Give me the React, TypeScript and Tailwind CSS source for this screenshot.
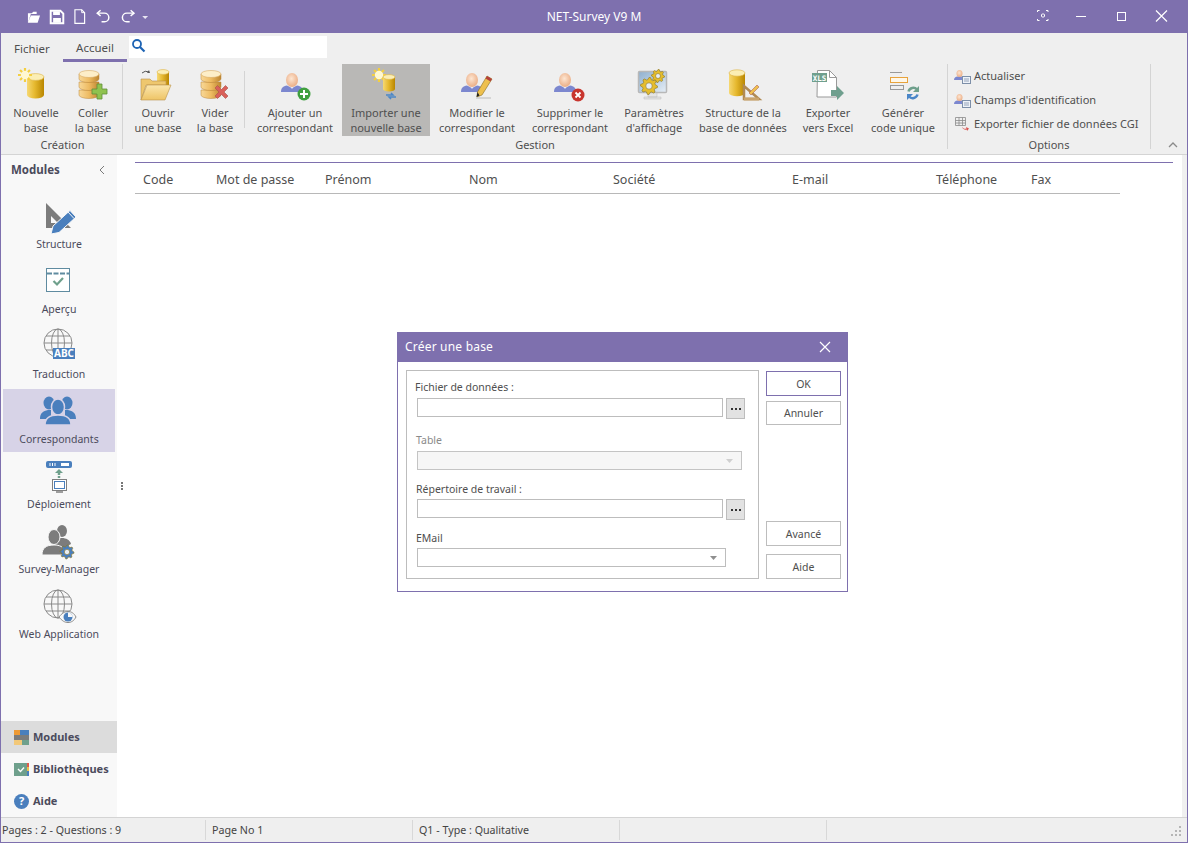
import type { ReactNode } from 'react';

/* ─── Shared gradients ─── */
function Defs() {
  return (
    <svg className="absolute h-0 w-0" aria-hidden="true">
      <defs>
        <linearGradient id="gold" x1="0" x2="1" y1="0" y2="0">
          <stop offset="0" stopColor="#f6d873" />
          <stop offset="0.45" stopColor="#e6b92f" />
          <stop offset="1" stopColor="#b98600" />
        </linearGradient>
        <linearGradient id="disc" x1="0" x2="1" y1="0" y2="0">
          <stop offset="0" stopColor="#f8d898" />
          <stop offset="0.5" stopColor="#eebb62" />
          <stop offset="1" stopColor="#bd8530" />
        </linearGradient>
        <linearGradient id="folder" x1="0" x2="0" y1="0" y2="1">
          <stop offset="0" stopColor="#fbe6ad" />
          <stop offset="1" stopColor="#eec465" />
        </linearGradient>
        <linearGradient id="screen" x1="0" x2="1" y1="0" y2="1">
          <stop offset="0" stopColor="#8fb0cf" />
          <stop offset="1" stopColor="#e6eef6" />
        </linearGradient>
        <radialGradient id="head" cx="0.45" cy="0.4" r="0.65">
          <stop offset="0" stopColor="#fde6d2" />
          <stop offset="1" stopColor="#eaa97f" />
        </radialGradient>
      </defs>
    </svg>
  );
}

/* ─── Icon pieces ─── */
function Cyl({ x, y, w, h }: { x: number; y: number; w: number; h: number }) {
  const ry = w / 5;
  return (
    <g>
      <path d={`M${x} ${y}v${h}a${w / 2} ${ry} 0 0 0 ${w} 0v${-h}z`} fill="url(#gold)" />
      <ellipse cx={x + w / 2} cy={y} rx={w / 2} ry={ry} fill="#fbeeb4" stroke="#dcb243" strokeWidth="0.6" />
    </g>
  );
}

function Burst({ cx, cy, r }: { cx: number; cy: number; r: number }) {
  const rays = [0, 45, 90, 135].map((a) => {
    const dx = Math.cos((a * Math.PI) / 180) * r;
    const dy = Math.sin((a * Math.PI) / 180) * r;
    return `M${cx - dx} ${cy - dy}L${cx + dx} ${cy + dy}`;
  });
  return (
    <g>
      <path d={rays.join('')} stroke="#f4cf3f" strokeWidth="2.200" />
      <circle cx={cx} cy={cy} r={r * 0.6} fill="#fff8d0" />
    </g>
  );
}

function Discs() {
  return (
    <g>
      {[23, 15, 7].map((y, i) => (
        <g key={y}>
          <path d={`M6 ${y + 3}v5a10 3.5 0 0 0 20 0v-5z`} fill="url(#disc)" stroke="#b9843a" strokeWidth="0.5" />
          {i === 2 && <ellipse cx="16" cy={y + 3} rx="10" ry="3.5" fill="#fdeec8" stroke="#d9ab63" strokeWidth="0.6" />}
        </g>
      ))}
    </g>
  );
}

function Person({ cx, cy }: { cx: number; cy: number }) {
  return (
    <g>
      <path
        d={`M${cx - 11} ${cy + 12}c0-4 2-6 6-6.5l5 2.5 5-2.5c4 .5 6 2.500 6 6.500z`}
        fill="#7c87cf"
      />
      <path d={`M${cx - 3} ${cy + 5}h6l-3 4z`} fill="#e9eaf5" />
      <ellipse cx={cx} cy={cy} rx="6" ry="7" fill="url(#head)" />
    </g>
  );
}

function Gear({ cx, cy, r, fill = '#e5bd2d' }: { cx: number; cy: number; r: number; fill?: string }) {
  const pts: string[] = [];
  const teeth = 8;
  for (let i = 0; i < teeth * 4; i++) {
    const a = (i / (teeth * 4)) * Math.PI * 2;
    const rad = i % 4 < 2 ? r : r * 0.76;
    pts.push(`${cx + Math.cos(a) * rad},${cy + Math.sin(a) * rad}`);
  }
  return (
    <g>
      <polygon points={pts.join(' ')} fill={fill} stroke="#8a7320" strokeWidth="0.6" />
      <circle cx={cx} cy={cy} r={r * 0.38} fill="#e8eef4" stroke="#8a7320" strokeWidth="0.6" />
    </g>
  );
}

function Box({ children }: { children: ReactNode }) {
  return (
    <svg width="40" height="40" viewBox="0 0 40 40" className="shrink-0">
      {children}
    </svg>
  );
}

/* ─── Ribbon icons ─── */
const NewBaseIcon = () => (
  <Box>
    <Cyl x={11} y={13} w={17} h={18} />
    <Burst cx={9} cy={11} r={7} />
  </Box>
);

const PasteBaseIcon = () => (
  <Box>
    <Discs />
    <path d="M24 20h5v5h5v5h-5v5h-5v-5h-5v-5h5z" fill="#8fc24f" stroke="#5f8f3a" strokeWidth="0.8" />
  </Box>
);

const OpenBaseIcon = () => (
  <Box>
    <Cyl x={19} y={8} w={12} h={16} />
    <path d="M4 9q3-3 7-1" stroke="#555" strokeWidth="1" fill="none" />
    <path d="M11 6l1 3-3 0z" fill="#555" />
    <path d="M3 15h9l2 2h14v4H8L3 36z" fill="#eec76e" stroke="#b8924a" strokeWidth="0.6" />
    <path d="M9 21h24l-6 15H3z" fill="url(#folder)" stroke="#b8924a" strokeWidth="0.6" />
  </Box>
);

const ClearBaseIcon = () => (
  <Box>
    <Discs />
    <path
      d="M20 21l2.500-2.500 4 4 4-4L33 21l-4 4 4 4-2.500 2.500-4-4-4 4L20 29l4-4z"
      transform="translate(0 3)"
      fill="#d9605a"
      stroke="#a8504a"
      strokeWidth="0.6"
    />
  </Box>
);

const AddPersonIcon = () => (
  <Box>
    <Person cx={17} cy={16} />
    <circle cx={29} cy={30} r={6.500} fill="#3f9f3f" />
    <path d="M28 26h2v3h3v2h-3v3h-2v-3h-3v-2h3z" fill="#fff" />
  </Box>
);

const ImportIcon = () => (
  <Box>
    <Burst cx={13} cy={11} r={7} />
    <Cyl x={17} y={13} w={12} h={12} />
    <path d="M20 31h7l-2-2M30 33h-7l2 2" stroke="#4a86c8" strokeWidth="1.500" fill="none" />
  </Box>
);

const EditPersonIcon = () => (
  <Box>
    <Person cx={15} cy={16} />
    <path d="M30 12l5 3-10 16-5 2 .5-5z" fill="#eec04e" stroke="#8a6d20" strokeWidth="0.6" />
    <path d="M30 12l5 3-1.500 2.500-5-3z" fill="#b4413c" />
    <path d="M19 34h15" stroke="#bbb" strokeWidth="1" />
    <path d="M20.500 28l-1 5 3-1.500z" fill="#222" />
  </Box>
);

const DeletePersonIcon = () => (
  <Box>
    <Person cx={15} cy={16} />
    <circle cx={28} cy={31} r={6.500} fill="#c8352e" />
    <path d="M25.500 28.500l5 5m0-5l-5 5" stroke="#fff" strokeWidth="1.800" />
  </Box>
);

const DisplayIcon = () => (
  <Box>
    <rect x={4.500} y={7.500} width={28} height={21} fill="url(#screen)" stroke="#b8b8b8" strokeWidth="1.500" rx="1" />
    <path d="M14 29h9v4h-9zM10 33h17v2H10z" fill="#e4e4e4" stroke="#b8b8b8" strokeWidth="0.5" />
    <Gear cx={24} cy={12} r={6.500} />
    <Gear cx={15} cy={22} r={8.500} />
  </Box>
);

const StructureIcon = () => (
  <Box>
    <Cyl x={6} y={9} w={16} h={20} />
    <path d="M21 22v13h15z" fill="none" stroke="#b08a54" strokeWidth="2.500" />
    <path d="M21 35h15" stroke="#c9a46e" strokeWidth="3" />
    <path d="M26 29l8-8 2 2-8 8z" fill="#eec04e" stroke="#a8504a" strokeWidth="0.5" />
  </Box>
);

const ExcelIcon = () => (
  <Box>
    <path d="M9.500 6.500h12l7 7v19.500h-19.500z" fill="#fff" stroke="#999" />
    <path d="M21.500 6.500v7h7" fill="none" stroke="#999" />
    <rect x={4} y={9} width={15} height={9} fill="#6f9f8e" />
    <text x={11.500} y={16.500} textAnchor="middle" fontSize="7.500" fontWeight="700" fill="#fff" fontFamily="'DejaVu Sans Mono', monospace">
      XLS
    </text>
    <path d="M23 26h6v-4l7 7-7 7v-4h-6z" fill="#6f9f8e" />
  </Box>
);

const CodeIcon = () => (
  <Box>
    <path d="M7 8.500h12M7 25.500h10" stroke="#999" strokeWidth="1" />
    <rect x={7.500} y={13.500} width={17} height={5} fill="#fff7e8" stroke="#e8a33c" />
    <rect x={7.500} y={21.500} width={13} height={4} fill="none" stroke="#999" />
    <path d="M25.500 27.500a5 5 0 0 1 8.500-2" stroke="#6fa08c" strokeWidth="2.500" fill="none" />
    <path d="M36 22v6h-6z" fill="#6fa08c" />
    <path d="M34.500 30.500a5 5 0 0 1-8.500 2" stroke="#4a86c8" strokeWidth="2.500" fill="none" />
    <path d="M24 36v-6h6z" fill="#4a86c8" />
  </Box>
);

function SmallPersonIcon() {
  return (
    <svg width="17" height="16" viewBox="0 0 17 16" className="shrink-0">
      <path d="M0 12c0-2 1.500-3.500 3.500-3.500h4c2 0 2.500 1.500 2.500 3.500z" fill="#7c87cf" />
      <ellipse cx="5.500" cy="5.500" rx="3" ry="3.500" fill="url(#head)" />
      <rect x="8.500" y="8.500" width="8" height="7" fill="#eef2f8" stroke="#7d8fa8" />
      <path d="M10 11h5M10 13h5" stroke="#7d8fa8" strokeWidth="0.8" />
    </svg>
  );
}

function SmallTableIcon() {
  return (
    <svg width="17" height="16" viewBox="0 0 17 16" className="shrink-0">
      <path d="M1.500 1.500h10v8h-10zM1.500 4.500h10M1.500 7h10M5 1.500v8M8.500 1.500v8" fill="none" stroke="#8a8a8a" strokeWidth="0.8" />
      <path d="M8 11c2 2 3 2 4.500 1.500L12 11l3 1.500L13 15l-.2-1.500C11 14 9 13.500 8 11z" fill="#d9534f" />
    </svg>
  );
}

/* ─── Sidebar icons ─── */
const StructureNav = () => (
  <Box>
    <path d="M7 7v25h25z" fill="#7c7c7c" />
    <path d="M12 20v7h7z" fill="#f8f8f8" />
    <path d="M12 38l2-8 17-15.500 6 6.500-17 15.500z" fill="#4a7fbd" stroke="#f8f8f8" strokeWidth="1" />
    <path d="M29 16l6 6.500" stroke="#f8f8f8" strokeWidth="1" />
  </Box>
);

const PreviewNav = () => (
  <Box>
    <rect x={7.500} y={7.500} width={23} height={23} fill="#fff" stroke="#5f8ba0" />
    <path d="M8 12.500h22" stroke="#5f8ba0" strokeWidth="2" strokeDasharray="5 1.500" />
    <path d="M14.500 20l3.500 3.500 6-6.500" stroke="#6fa08c" strokeWidth="2.200" fill="none" />
  </Box>
);

function Globe({ cx, cy }: { cx: number; cy: number }) {
  return (
    <g stroke="#8a8a8a" strokeWidth="1" fill="none">
      <circle cx={cx} cy={cy} r={14} />
      <ellipse cx={cx} cy={cy} rx={6.500} ry={14} />
      <path d={`M${cx} ${cy - 14}v28M${cx - 14} ${cy}h28M${cx - 12} ${cy - 7}h24M${cx - 12} ${cy + 7}h24`} />
    </g>
  );
}

const TranslationNav = () => (
  <Box>
    <Globe cx={19} cy={17} />
    <rect x={14} y={22} width={22} height={11} fill="#4a7fbd" />
    <text x={25} y={31} textAnchor="middle" fontSize="10" fontWeight="700" fill="#fff" fontFamily="'Noto Sans', sans-serif">
      ABC
    </text>
  </Box>
);

const PeopleNav = () => (
  <Box>
    <g fill="#4a7fbd">
      <ellipse cx={10} cy={12} rx={5.500} ry={6.500} />
      <ellipse cx={28} cy={12} rx={5.500} ry={6.500} />
      <path d="M1 28c0-6 3-8 8-9h3v9zM37 28c0-6-3-8-8-9h-3v9z" />
    </g>
    <g fill="#4a7fbd" stroke="#d7d3e7" strokeWidth="1.500">
      <ellipse cx={19} cy={16} rx={6.500} ry={8} />
      <path d="M6 34c0-7 5-10 13-10s13 3 13 10z" />
    </g>
  </Box>
);

const DeployNav = () => (
  <Box>
    <rect x={7} y={5} width={26} height={7} rx={2} fill="#4a7fbd" />
    <rect x={22} y={7} width={8} height={3} fill="#fff" />
    <path d="M11 7v3M13.500 7v3M16 7v3" stroke="#fff" strokeWidth="1" />
    <path d="M20 13l4 4h-8z" fill="#6fa08c" />
    <path d="M20 17v6" stroke="#6fa08c" strokeWidth="2.500" strokeDasharray="2 1" />
    <rect x={13.500} y={23.500} width={14} height={11} fill="#fff" stroke="#808080" />
    <rect x={15.500} y={25.500} width={10} height={7} fill="#fff" stroke="#4a7fbd" />
    <path d="M17 36h7" stroke="#808080" strokeWidth="1.500" />
  </Box>
);

const ManagerNav = () => (
  <Box>
    <g fill="#7c7c7c">
      <ellipse cx={23} cy={10} rx={5} ry={6} />
      <path d="M16 25c0-6 3-8 7-8s8 2 9 6l-9 5z" />
    </g>
    <g fill="#7c7c7c" stroke="#f8f8f8" strokeWidth="1">
      <ellipse cx={15} cy={16} rx={6} ry={7.500} />
      <path d="M3 34c0-7 4-10 12-10 6 0 9 2 10 5l-2 5z" />
    </g>
    <Gear cx={28} cy={31} r={7} fill="#4a7fbd" />
  </Box>
);

const WebNav = () => (
  <Box>
    <Globe cx={19} cy={18} />
    <path d="M20 31c3-4 6-5.500 9-5.500s6 1.500 8 5.500c-2 4-5 5.500-8 5.500s-6-1.500-9-5.500z" fill="#f8f8f8" stroke="#8a8a8a" />
    <circle cx={29} cy={31} r={4.500} fill="#4a7fbd" />
    <path d="M29 31v-4.500a4.500 4.500 0 0 1 4.500 4.500z" fill="#f8f8f8" />
  </Box>
);

/* ─── Data ─── */
const creation = [
  { w: 'w-[66px]', icon: <NewBaseIcon />, lines: ['Nouvelle', 'base'] },
  { w: 'w-[48px]', icon: <PasteBaseIcon />, lines: ['Coller', 'la base'] },
];

const gestionA = [
  { w: 'w-[70px]', icon: <OpenBaseIcon />, lines: ['Ouvrir', 'une base'] },
  { w: 'w-[44px]', icon: <ClearBaseIcon />, lines: ['Vider', 'la base'] },
];

const gestionB = [
  { w: 'w-[94px]', icon: <AddPersonIcon />, lines: ['Ajouter un', 'correspondant'] },
  { w: 'w-[88px]', icon: <ImportIcon />, lines: ['Importer une', 'nouvelle base'], active: true },
  { w: 'w-[94px]', icon: <EditPersonIcon />, lines: ['Modifier le', 'correspondant'] },
  { w: 'w-[92px]', icon: <DeletePersonIcon />, lines: ['Supprimer le', 'correspondant'] },
  { w: 'w-[76px]', icon: <DisplayIcon />, lines: ['Paramètres', "d'affichage"] },
  { w: 'w-[102px]', icon: <StructureIcon />, lines: ['Structure de la', 'base de données'] },
  { w: 'w-[68px]', icon: <ExcelIcon />, lines: ['Exporter', 'vers Excel'] },
  { w: 'w-[82px]', icon: <CodeIcon />, lines: ['Générer', 'code unique'] },
];

const modules = [
  { label: 'Structure', icon: <StructureNav /> },
  { label: 'Aperçu', icon: <PreviewNav /> },
  { label: 'Traduction', icon: <TranslationNav /> },
  { label: 'Correspondants', icon: <PeopleNav />, active: true },
  { label: 'Déploiement', icon: <DeployNav /> },
  { label: 'Survey-Manager', icon: <ManagerNav /> },
  { label: 'Web Application', icon: <WebNav /> },
];

const columns = [
  { label: 'Code', w: 'w-[73px]' },
  { label: 'Mot de passe', w: 'w-[109px]' },
  { label: 'Prénom', w: 'w-[144px]' },
  { label: 'Nom', w: 'w-[144px]' },
  { label: 'Société', w: 'w-[179px]' },
  { label: 'E-mail', w: 'w-[144px]' },
  { label: 'Téléphone', w: 'w-[95px]' },
  { label: 'Fax', w: 'w-[60px]' },
];

/* ─── Title bar ─── */
function TitleBar() {
  return (
    <div className="flex h-[33px] shrink-0 items-center bg-[#7e70ae] text-white">
      <div className="flex w-[180px] items-center">
        <svg width="160" height="18" viewBox="0 0 160 18" className="ml-[25px] mt-px" fill="none">
          <path d="M2 15V5h4l1.500-1.500H11V6H5L2 15h10l2.500-7.500H5" fill="#fff" />
          <path d="M25.500 2.500h10l3 3v10h-13z" stroke="#fff" strokeWidth="2" />
          <path d="M28 3h7v4h-7zM28 10h8v5h-8z" fill="#fff" />
          <path d="M50.500 1.500h7l3 3v11h-10z" stroke="#fff" strokeWidth="1.200" />
          <path d="M57.500 1.500v3h3" stroke="#fff" strokeWidth="1" />
          <path d="M74 5h7a4.500 4.500 0 0 1 0 9h-3" stroke="#fff" strokeWidth="1.500" />
          <path d="M77 2l-3.500 3 3.500 3" stroke="#fff" strokeWidth="1.500" />
          <path d="M111 5h-7a4.500 4.500 0 0 0 0 9h3" stroke="#fff" strokeWidth="1.500" />
          <path d="M108 2l3.500 3-3.500 3" stroke="#fff" strokeWidth="1.500" />
          <path d="M120 8h6l-3 3z" fill="#e8e4f2" />
        </svg>
      </div>
      <div className="flex-1 text-center text-[12px]">NET-Survey V9 M</div>
      <div className="flex w-[180px] items-center justify-end">
        <svg width="140" height="18" viewBox="0 0 140 18" fill="none" stroke="#fff" className="-mt-[2px]">
          <path d="M2.500 5V3.500h2M11 3.500h2V5M2.500 12v1.500h2M11 13.500h2V12" />
          <rect x="6.500" y="7" width="3" height="3" rx="1" />
          <path d="M41 9.500h10" />
          <rect x="82.500" y="5.500" width="8" height="8" />
          <path d="M121 3.500l11 11m0-11l-11 11" strokeWidth="1.200" />
        </svg>
        <span className="w-[12px]" />
      </div>
    </div>
  );
}

/* ─── Ribbon ─── */
function RibbonButton({ w, icon, lines, active }: { w: string; icon: ReactNode; lines: string[]; active?: boolean }) {
  return (
    <div className={`${w} flex h-[72px] shrink-0 flex-col items-center ${active ? 'bg-[#b9b8b6]' : ''}`}>
      <div className="h-[41px]">{icon}</div>
      <div className="whitespace-nowrap text-center text-[11px] leading-[15px] text-[#4f4f4f]">
        {lines.map((l) => (
          <div key={l}>{l}</div>
        ))}
      </div>
    </div>
  );
}

function GroupLabel({ children }: { children: ReactNode }) {
  return <div className="absolute inset-x-0 top-[73px] text-center text-[11px] leading-[16px] text-[#4f4f4f]">{children}</div>;
}

function Ribbon() {
  return (
    <div className="flex h-[122px] shrink-0 flex-col border-b border-[#d4d4d4] bg-[#efefef]">
      <div className="flex h-[31px] shrink-0 pl-px">
        <div className="w-[61px] pl-[12px] pt-[8px] text-[11.5px] leading-[16px] text-[#4f4f4f]">Fichier</div>
        <div className="h-[29px] w-[64px] border-b-[3px] border-[#7e70ae] pt-[7px] text-center text-[11.5px] leading-[16px] text-[#4f4f4f]">
          Accueil
        </div>
        <div className="ml-[2px] mt-[3px] flex h-[22px] w-[198px] items-start bg-white pl-[2px] pt-[2px]">
          <svg width="15" height="15" viewBox="0 0 15 15" fill="none" stroke="#1e64b4">
            <circle cx="6" cy="6" r="4" strokeWidth="1.800" />
            <path d="M9 9l4.500 4.500" strokeWidth="2.200" />
          </svg>
        </div>
      </div>
      <div className="flex pl-[2px]">
        <div className="relative flex h-[85px] w-[120px] shrink-0 border-r border-[#d4d4d4]">
          {creation.map((b) => (
            <RibbonButton key={b.lines[0]} {...b} />
          ))}
          <GroupLabel>Création</GroupLabel>
        </div>
        <div className="relative flex h-[85px] w-[825px] shrink-0 border-r border-[#d4d4d4]">
          {gestionA.map((b) => (
            <RibbonButton key={b.lines[0]} {...b} />
          ))}
          <div className="ml-[7px] mr-[3px] mt-[7px] h-[57px] w-px bg-[#d4d4d4]" />
          {gestionB.map((b) => (
            <RibbonButton key={b.lines[0]} {...b} />
          ))}
          <GroupLabel>Gestion</GroupLabel>
        </div>
        <div className="relative h-[85px] w-[203px] shrink-0 border-r border-[#d4d4d4] pl-[6px]">
          {[
            { icon: <SmallPersonIcon />, label: 'Actualiser' },
            { icon: <SmallPersonIcon />, label: "Champs d'identification" },
            { icon: <SmallTableIcon />, label: 'Exporter fichier de données CGI' },
          ].map((o) => (
            <div key={o.label} className="flex h-[24px] items-center gap-[3px] whitespace-nowrap text-[11px] text-[#4f4f4f]">
              {o.icon}
              {o.label}
            </div>
          ))}
          <GroupLabel>Options</GroupLabel>
        </div>
        <svg width="12" height="8" viewBox="0 0 12 8" fill="none" stroke="#8a8a8a" strokeWidth="1.300" className="ml-[16px] mt-[77px]">
          <path d="M2 6l4-4 4 4" />
        </svg>
      </div>
    </div>
  );
}

/* ─── Sidebar ─── */
function BottomRow({ label, active, icon }: { label: string; active?: boolean; icon: ReactNode }) {
  return (
    <div className={`flex h-[32px] items-center gap-[4px] pl-[13px] pt-px text-[11px] font-bold text-[#4b4b5c] ${active ? 'bg-[#dcdcdc]' : ''}`}>
      {icon}
      {label}
    </div>
  );
}

function Sidebar() {
  return (
    <div className="flex w-[116px] shrink-0 flex-col bg-[#f8f8f8]">
      <div className="flex h-[30px] items-center justify-between pl-[10px] pr-[11px] text-[11.5px] font-bold text-[#4b4b5c]">
        Modules
        <svg width="8" height="10" viewBox="0 0 8 10" fill="none" stroke="#7a7a7a">
          <path d="M6 1L2 5l4 4" />
        </svg>
      </div>
      <div className="mt-[9px] flex flex-col gap-[2px] px-[2px]">
        {modules.map((m) => (
          <div key={m.label} className={`flex h-[63px] flex-col items-center pt-[2px] ${m.active ? 'bg-[#d7d3e7]' : ''}`}>
            {m.icon}
            <div className="whitespace-nowrap text-[10.5px] leading-[16px] text-[#4b4b5c]">{m.label}</div>
          </div>
        ))}
      </div>
      <div className="mt-auto">
        <BottomRow
          active
          label="Modules"
          icon={
            <svg width="15" height="15" viewBox="0 0 15 15">
              <rect x="0" y="0" width="6" height="5" fill="#ee9a34" />
              <rect x="6" y="0" width="9" height="5" fill="#4a7fbd" />
              <rect x="0" y="5" width="15" height="5" fill="#7c7c7c" />
              <rect x="0" y="10" width="8" height="5" fill="#f2c879" />
              <rect x="8" y="10" width="7" height="5" fill="#6fa08c" />
            </svg>
          }
        />
        <BottomRow
          label="Bibliothèques"
          icon={
            <svg width="15" height="15" viewBox="0 0 15 15">
              <rect x="0" y="1" width="13" height="13" fill="#6fa08c" />
              <rect x="13" y="1" width="2" height="4" fill="#e05a4a" />
              <rect x="13" y="5" width="2" height="4" fill="#eec04e" />
              <rect x="13" y="9" width="2" height="5" fill="#4a7fbd" />
              <path d="M4 7l2.500 2.500L10 5.500" stroke="#fff" strokeWidth="1.400" fill="none" />
            </svg>
          }
        />
        <BottomRow
          label="Aide"
          icon={
            <span className="flex h-[15px] w-[15px] items-center justify-center rounded-full bg-[#4a7fbd] text-[11px] font-bold text-white">?</span>
          }
        />
      </div>
    </div>
  );
}

/* ─── Main table header ─── */
function Content() {
  return (
    <div className="flex flex-1">
      <div className="flex w-[18px] shrink-0 items-center pl-[4px]">
        <div className="flex flex-col gap-px">
          <span className="h-[2px] w-[2px] bg-[#777]" />
          <span className="h-[2px] w-[2px] bg-[#777]" />
          <span className="h-[2px] w-[2px] bg-[#777]" />
        </div>
      </div>
      <div className="flex-1 pt-[7px]">
        <div className="h-px w-[1038px] bg-[#7e70ae]" />
        <div className="flex h-[31px] w-[985px] items-center border-b border-[#b8b8b8] pl-[8px] pt-[5px] text-[12.5px] text-[#4f4f4f]">
          {columns.map((c) => (
            <div key={c.label} className={c.w}>
              {c.label}
            </div>
          ))}
        </div>
      </div>
      <div className="w-[5px] shrink-0 bg-[#f0f0f0]" />
    </div>
  );
}

/* ─── Dialog ─── */
function DialogButton({ children, primary, className = '' }: { children: ReactNode; primary?: boolean; className?: string }) {
  return (
    <div
      className={`flex h-[25px] w-[75px] items-center justify-center border text-[10.5px] text-[#4f4f4f] ${
        primary ? 'border-[#7e70ae]' : 'border-[#bdbdbd]'
      } ${className}`}
    >
      {children}
    </div>
  );
}

function DialogLabel({ children, className = '', muted }: { children: ReactNode; className?: string; muted?: boolean }) {
  return <div className={`h-[16px] text-[10.5px] leading-[16px] ${muted ? 'text-[#8a8a8a]' : 'text-[#4f4f4f]'} ${className}`}>{children}</div>;
}

function PathField({ className = '' }: { className?: string }) {
  return (
    <div className={`flex h-[21px] items-start gap-[3px] ${className}`}>
      <div className="h-[19px] w-[306px] border border-[#bdbdbd] bg-white" />
      <div className="flex h-[21px] w-[19px] items-center justify-center gap-[2px] border border-[#bdbdbd] bg-[#e2e2e2]">
        <span className="h-[2px] w-[2px] bg-[#333]" />
        <span className="h-[2px] w-[2px] bg-[#333]" />
        <span className="h-[2px] w-[2px] bg-[#333]" />
      </div>
    </div>
  );
}

function SelectField({ width, disabled, className = '' }: { width: string; disabled?: boolean; className?: string }) {
  return (
    <div
      className={`flex h-[19px] items-center justify-end border pr-[8px] ${width} ${
        disabled ? 'border-[#c4c4c4] bg-[#f6f6f6]' : 'border-[#bdbdbd] bg-white'
      } ${className}`}
    >
      <svg width="7" height="4" viewBox="0 0 7 4">
        <path d="M0 0h7L3.500 4z" fill={disabled ? '#cfcfcf' : '#8f8f8f'} />
      </svg>
    </div>
  );
}

function Dialog() {
  return (
    <div className="absolute left-[396px] top-[332px] flex h-[260px] w-[451px] flex-col border border-t-0 border-[#7e70ae] bg-white">
      <div className="flex h-[30px] shrink-0 items-center justify-between bg-[#7e70ae] pl-[7px] pr-[16px] text-[12px] tracking-[0.2px] text-white">
        Créer une base
        <svg width="12" height="12" viewBox="0 0 12 12" stroke="#fff" strokeWidth="1.200">
          <path d="M1 1l10 10m0-10L1 11" />
        </svg>
      </div>
      <div className="flex pl-[8px] pt-[8px]">
        <div className="h-[209px] w-[353px] border border-[#bdbdbd] pl-[10px] pt-[8px]">
          <DialogLabel className="-ml-[2px]">Fichier de données :</DialogLabel>
          <PathField className="mt-[3px]" />
          <DialogLabel muted className="-ml-px mt-[13px]">
            Table
          </DialogLabel>
          <SelectField disabled width="w-[325px]" className="mt-[3px]" />
          <DialogLabel className="-ml-px mt-[11px]">Répertoire de travail :</DialogLabel>
          <PathField className="mt-[2px]" />
          <DialogLabel className="-ml-px mt-[10px]">EMail</DialogLabel>
          <SelectField width="w-[309px]" className="mt-[2px]" />
        </div>
        <div className="ml-[7px] flex h-[209px] flex-col pt-px">
          <DialogButton primary className="pt-[2px]">OK</DialogButton>
          <DialogButton className="mt-[5px] pt-px">Annuler</DialogButton>
          <DialogButton className="mt-[96px] pt-[2px]">Avancé</DialogButton>
          <DialogButton className="mt-[8px] pt-[2px]">Aide</DialogButton>
        </div>
      </div>
    </div>
  );
}

/* ─── Status bar ─── */
function StatusBar() {
  return (
    <div className="flex h-[25px] shrink-0 items-center border-t border-[#d4d4d4] bg-[#efefef] text-[10.7px] text-[#444]">
      {['Pages : 2 - Questions : 9', 'Page No 1', 'Q1 - Type : Qualitative', ''].map((s, i) => (
        <div
          key={i}
          className="flex h-[20px] w-[207px] items-center border-r border-[#d8d8d8] pl-[6px] pt-px first:w-[205px] first:pl-px"
        >
          {s}
        </div>
      ))}
      <svg width="12" height="12" viewBox="0 0 12 12" fill="#b5b5b5" className="ml-auto mr-[4px] mt-[4px]">
        <rect x="8" y="0" width="2" height="2" />
        <rect x="4" y="4" width="2" height="2" />
        <rect x="8" y="4" width="2" height="2" />
        <rect x="0" y="8" width="2" height="2" />
        <rect x="4" y="8" width="2" height="2" />
        <rect x="8" y="8" width="2" height="2" />
      </svg>
    </div>
  );
}

export default function App() {
  return (
    <div className="relative flex h-[843px] w-[1188px] flex-col overflow-hidden border-x border-b border-[#7e70ae] bg-white font-['Noto_Sans',sans-serif]">
      <Defs />
      <TitleBar />
      <Ribbon />
      <div className="flex min-h-0 flex-1">
        <Sidebar />
        <Content />
      </div>
      <StatusBar />
      <Dialog />
    </div>
  );
}
